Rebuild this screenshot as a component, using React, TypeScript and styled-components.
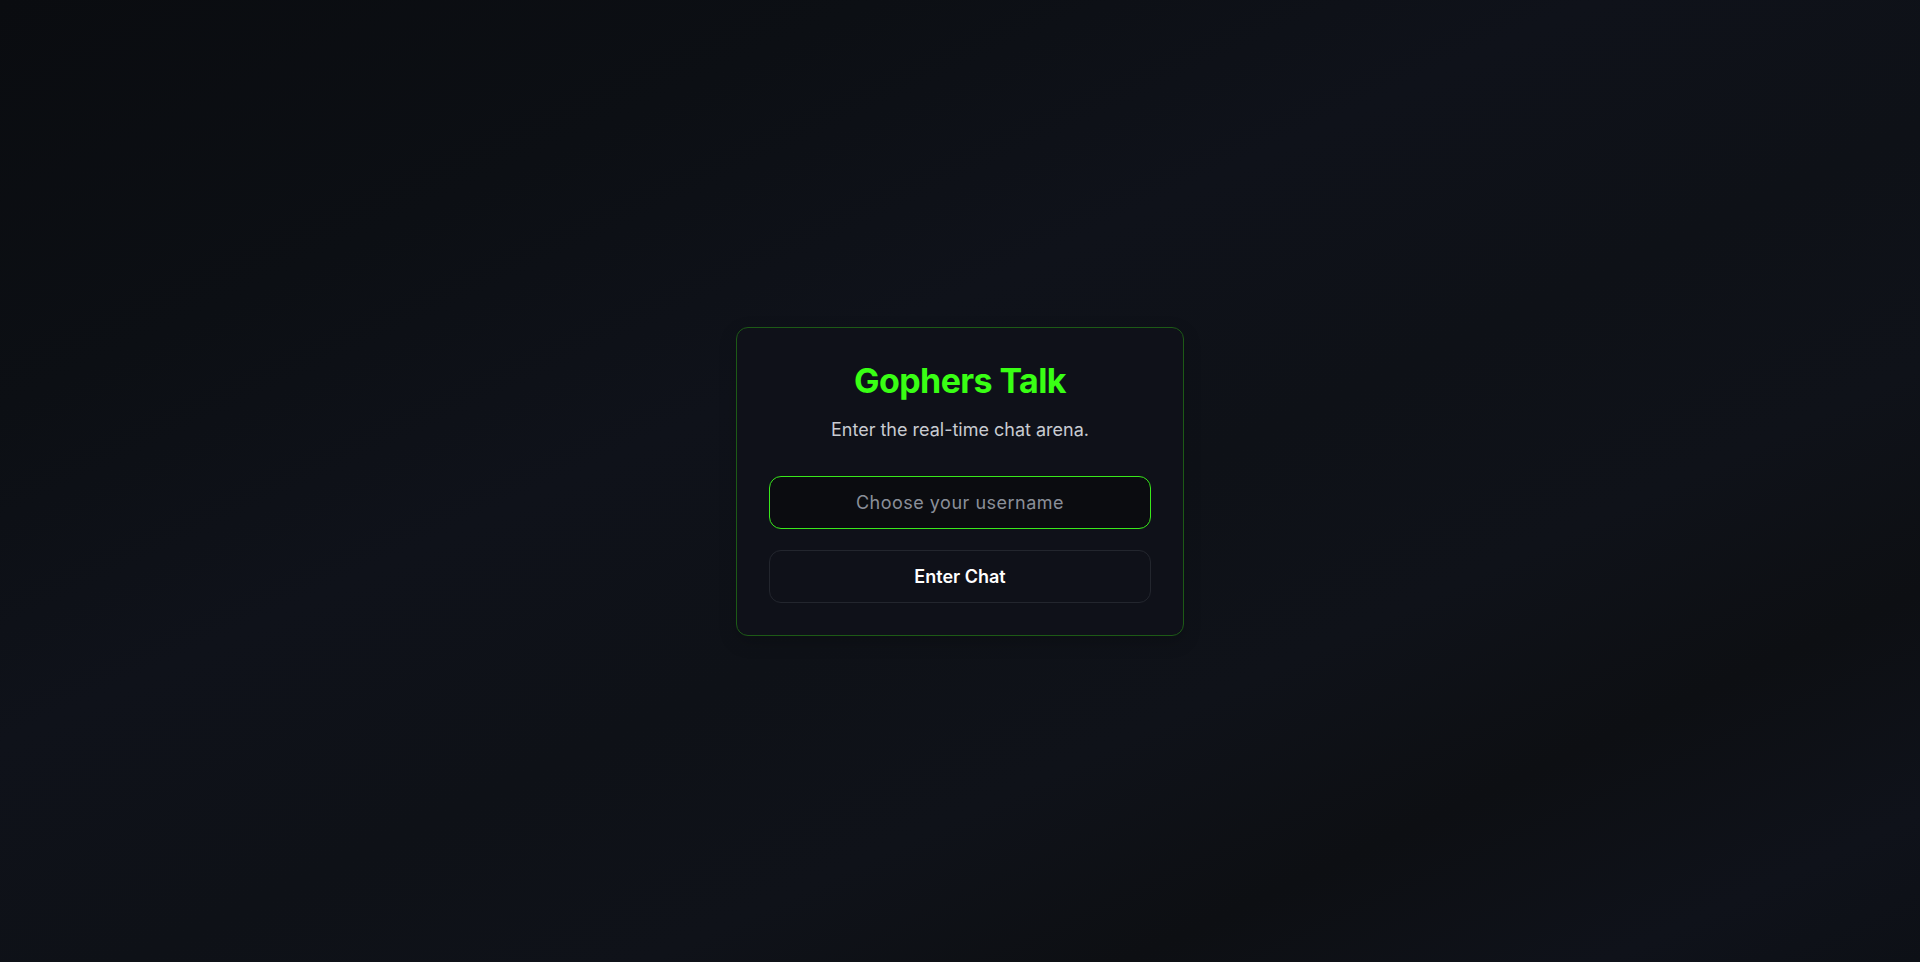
import React from "react";
import styled, { createGlobalStyle } from "styled-components";

const GlobalStyle = createGlobalStyle`
  html, body, #root { margin: 0; padding: 0; height: 100%; }
  body {
    background: #0b0d12;
    font-family: Inter, "Noto Sans", sans-serif;
  }
  * { box-sizing: border-box; }
`;

const Page = styled.main`
  min-height: 100vh;
  display: flex;
  align-items: center;
  justify-content: center;
  background: linear-gradient(
    155deg,
    #0a0c10 0%,
    #0c0f14 22%,
    #0f121a 40%,
    #0e1117 55%,
    #0f1219 68%,
    #0d0f13 80%,
    #0f121a 92%,
    #0d1016 100%
  );
`;

const Card = styled.section`
  width: 448px;
  padding: 33px 32px 32px;
  border: 1px solid #1d5a16;
  border-radius: 12px;
  background: rgba(15, 18, 26, 0.9);
  box-shadow: 0 6px 18px rgba(0, 0, 0, 0.18);
  display: flex;
  flex-direction: column;
  align-items: stretch;
  text-align: center;
`;

const Title = styled.h1`
  margin: 0;
  font-family: Inter, sans-serif;
  font-size: 34px;
  line-height: 40px;
  font-weight: 700;
  letter-spacing: -0.6px;
  color: #39ff14;
`;

const Subtitle = styled.p`
  margin: 15px 0 32px;
  font-size: 18px;
  line-height: 28px;
  color: #c8cbd1;
`;

const Form = styled.form`
  display: flex;
  flex-direction: column;
  gap: 21px;
`;

const Input = styled.input`
  height: 53px;
  width: 100%;
  padding: 0 16px;
  border: 1.5px solid #39e81b;
  border-radius: 12px;
  background: #0b0c10;
  color: #e6e8eb;
  font-family: Inter, sans-serif;
  font-size: 18px;
  letter-spacing: 0.5px;
  text-align: center;
  outline: none;
  caret-color: #ffffff;
  &::placeholder { color: #8a8f99; }
`;

const Button = styled.button`
  height: 53px;
  width: 100%;
  border: 1px solid #23262e;
  border-radius: 12px;
  background: transparent;
  color: #ffffff;
  font-family: Inter, sans-serif;
  font-size: 18px;
  font-weight: 600;
  cursor: pointer;
`;

export default function App() {
  return (
    <>
      <GlobalStyle />
      <Page>
        <Card>
          <Title>Gophers Talk</Title>
          <Subtitle>Enter the real-time chat arena.</Subtitle>
          <Form onSubmit={(e) => e.preventDefault()}>
            <Input autoFocus placeholder="Choose your username" />
            <Button type="submit">Enter Chat</Button>
          </Form>
        </Card>
      </Page>
    </>
  );
}
